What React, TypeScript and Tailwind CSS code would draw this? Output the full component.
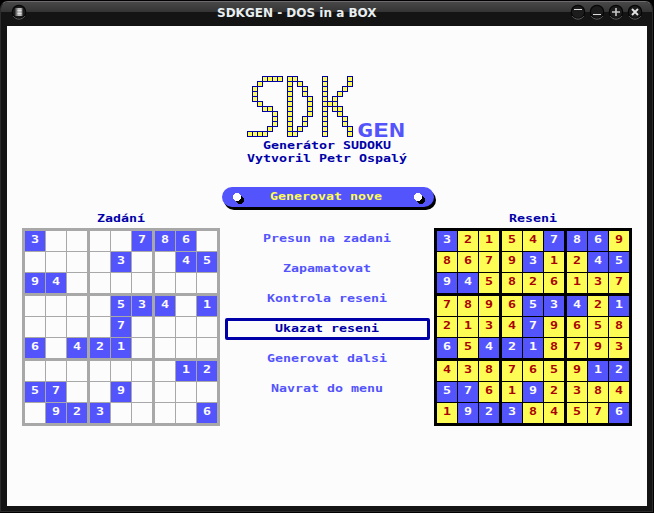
import React from "react";

const GIVEN = [
  "3....786.",
  "....3..45",
  "94.......",
  "....534.1",
  "....7....",
  "6.421....",
  ".......12",
  "57..9....",
  ".923....6",
];

const SOLUTION = [
  "321547869",
  "867931245",
  "945826137",
  "789653421",
  "213479658",
  "654218793",
  "438765912",
  "576192384",
  "192384576",
];

const LOGO = [
  "...####.##.....#....#",
  "..#.....#.#....#....#",
  ".#......#..#...#...#.",
  ".#......#..#...#..#..",
  ".#......#...#..#.#...",
  "..#.....#...#..###...",
  "...##...#...#..#.##..",
  ".....#..#...#..#..#..",
  ".....#..#..#...#...#.",
  ".....#..#..#...#...#.",
  "....#...#.#....#....#",
  "####....##.....#....#",
];

const MENU = [
  "Presun na zadani",
  "Zapamatovat",
  "Kontrola reseni",
  "Ukazat reseni",
  "Generovat dalsi",
  "Navrat do menu",
];

// Fixed-width text whose characters each fill an 8px wide cell.
function DosText({ children, className = "" }: { children: string; className?: string }) {
  return (
    <span
      className={`block h-[13px] shrink-0 text-left whitespace-pre font-['DejaVu_Sans_Mono',monospace] text-[10px] leading-[13px] font-bold ${className}`}
      style={{ width: children.length * 8 }}
    >
      <span className="-ml-[0.5px] inline-block origin-left scale-x-[1.329]">{children}</span>
    </span>
  );
}

function Logo() {
  return (
    <svg width="106" height="61" shapeRendering="crispEdges" className="shrink-0">
      {LOGO.flatMap((row, y) =>
        row.split("").map((c, x) =>
          c === "#" ? (
            <g key={`${x}-${y}`}>
              <rect x={x * 5} y={y * 5} width="6" height="6" fill="#0000a8" />
              <rect x={x * 5 + 1} y={y * 5 + 1} width="4" height="4" fill="#fcfc54" />
            </g>
          ) : null
        )
      )}
    </svg>
  );
}

function Board({ solved = false }: { solved?: boolean }) {
  const rows = solved ? SOLUTION : GIVEN;
  return (
    <div className={`grid grid-cols-3 gap-[3px] p-[3px] ${solved ? "bg-black" : "bg-[#a8a8a8]"}`}>
      {Array.from({ length: 9 }, (_, box) => (
        <div key={box} className="grid grid-cols-[20px_20px_20px] gap-px">
          {Array.from({ length: 9 }, (_, i) => {
            const r = Math.floor(box / 3) * 3 + Math.floor(i / 3);
            const c = (box % 3) * 3 + (i % 3);
            const given = GIVEN[r][c] !== ".";
            const tone = given
              ? "bg-[#5454fc] text-[#fcfcfc]"
              : solved
                ? "bg-[#fcfc54] text-[#a80000]"
                : "bg-[#fcfcfc]";
            return (
              <div key={i} className={`flex h-5 justify-center pt-0.5 ${tone}`}>
                {rows[r][c] !== "." && <DosText>{rows[r][c]}</DosText>}
              </div>
            );
          })}
        </div>
      ))}
    </div>
  );
}

function Knob() {
  return (
    <svg width="11" height="11" shapeRendering="crispEdges" className="shrink-0">
      <circle cx="7" cy="7" r="3.9" fill="#000" />
      <circle cx="4" cy="4" r="3.8" fill="#fcfcfc" />
    </svg>
  );
}

function RoundButton({ children }: { children: React.ReactNode }) {
  return (
    <svg width="16" height="16" viewBox="0 0 16 16" className="shrink-0">
      <circle cx="8" cy="8" r="6.7" fill="#1c1c1c" stroke="#070707" strokeWidth="1.2" />
      <path d="M2.2 12.2A7.2 7.2 0 0 0 13.8 12.2" fill="none" stroke="#666" strokeWidth="0.9" />
      {children}
    </svg>
  );
}

export default function App() {
  return (
    <div className="h-[513px] w-[654px] overflow-hidden bg-black pt-px pr-px pb-px">
      <div className="h-[511px] w-[653px] rounded-t-lg border border-[#2b2b2b] border-t-[#6e6a6e] bg-[#141414] px-[6px] pb-[5px]">
        <div className="-mx-[6px] flex h-6 items-start rounded-t-[7px] bg-[linear-gradient(#484848_0px,#343434_10px,#141414_10px)] pr-[9px] pl-[10px]">
          <div className="flex h-5 w-[73px] items-center">
            <RoundButton>
              <rect x="4.5" y="4" width="7" height="8" fill="#777" />
              <rect x="6.5" y="4" width="4" height="8" fill="#bbb" />
              <path d="M6.5 6.5h4M6.5 9.5h4" stroke="#ddd" />
            </RoundButton>
          </div>
          <h1 className="flex-1 pl-[133px] font-['DejaVu_Sans',sans-serif] text-[12px] leading-[22px] font-bold whitespace-nowrap text-[#e8eef0]">
            SDKGEN - DOS in a BOX
          </h1>
          <div className="flex h-5 w-[73px] items-center gap-[3px]">
            <RoundButton>
              <path d="M4 5.5h8" stroke="#ddd" />
            </RoundButton>
            <RoundButton>
              <path d="M4 10.5h8" stroke="#ddd" />
            </RoundButton>
            <RoundButton>
              <path d="M4 8h8M8 4v8" stroke="#c8c8c8" strokeWidth="1.6" />
            </RoundButton>
            <RoundButton>
              <path d="M5 5l6 6M11 5l-6 6" stroke="#e4e4e4" strokeWidth="1.9" />
            </RoundButton>
          </div>
        </div>

        <main className="flex h-[480px] w-[640px] flex-col bg-[#fcfcfc] pt-[50px]">
          <div className="flex h-[63px] items-start pl-[240px]">
            <Logo />
            <span className="mt-[45px] ml-1 block h-5 w-12 font-['DejaVu_Sans_Mono',monospace] text-[19.2px] leading-[20px] font-bold text-[#5454fc]">
              <span className="inline-block origin-left scale-x-[1.384]">GEN</span>
            </span>
          </div>
          <div className="flex flex-col items-center text-[#0000a8]">
            <DosText>Generátor SUDOKU</DosText>
            <DosText>Vytvoril Petr Ospalý</DosText>
          </div>

          <button className="mt-[22px] ml-[215px] flex h-5 w-[212px] shrink-0 items-start justify-between rounded-full bg-[#5454fc] pt-[6px] pr-[9px] pl-[11px] text-[#fcfc54] shadow-[2px_3px_0_#000]">
            <Knob />
            <DosText className="-mt-[3px] mr-[5px]">Generovat nove</DosText>
            <Knob />
          </button>

          <div className="mt-[5px] flex items-start pl-[15px]">
            <section className="flex flex-col items-center gap-[3px]">
              <DosText className="text-[#0000a8]">Zadání</DosText>
              <Board />
            </section>
            <nav className="mt-4 mr-1 ml-[5px] flex w-[205px] flex-col gap-2">
              {MENU.map((label) => (
                <div
                  key={label}
                  className={`flex h-[22px] justify-center rounded-[2px] border-[3px] pt-px ${
                    label === "Ukazat reseni"
                      ? "border-[#0000a8] text-[#0000a8]"
                      : "border-transparent text-[#5454fc]"
                  }`}
                >
                  <DosText>{label}</DosText>
                </div>
              ))}
            </nav>
            <section className="flex flex-col items-center gap-[3px]">
              <DosText className="text-[#0000a8]">Reseni</DosText>
              <Board solved />
            </section>
          </div>
        </main>
      </div>
    </div>
  );
}
